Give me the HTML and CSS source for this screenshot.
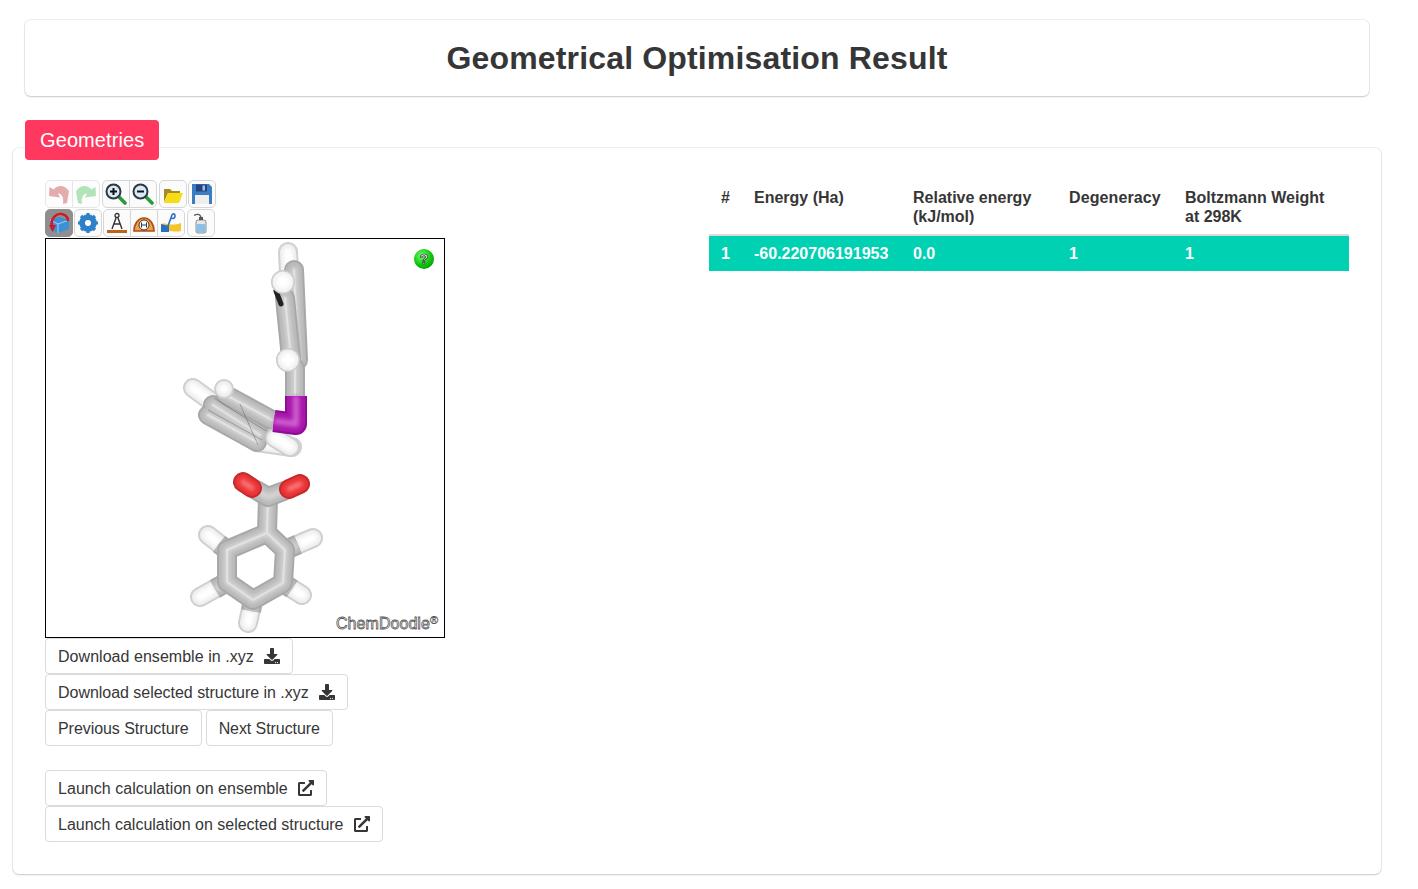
FILE: index.html
```html
<!DOCTYPE html>
<html lang="en">
<head>
<meta charset="utf-8">
<title>Geometrical Optimisation Result</title>
<link rel="stylesheet" href="styles.css">
</head>
<body>
<svg class="sprites" width="0" height="0" aria-hidden="true">
  <symbol id="i-download" viewBox="0 0 512 512"><path d="M216 0h80c13.3 0 24 10.7 24 24v168h87.7c17.8 0 26.7 21.5 14.1 34.1L269.7 378.3c-7.5 7.5-19.8 7.5-27.3 0L90.1 226.1c-12.6-12.6-3.7-34.1 14.1-34.1H192V24c0-13.3 10.7-24 24-24zm296 376v112c0 13.3-10.7 24-24 24H24c-13.3 0-24-10.7-24-24V376c0-13.3 10.7-24 24-24h146.7l49 49c20.1 20.1 52.5 20.1 72.6 0l49-49H488c13.3 0 24 10.7 24 24zm-124 88c0-11-9-20-20-20s-20 9-20 20 9 20 20 20 20-9 20-20zm64 0c0-11-9-20-20-20s-20 9-20 20 9 20 20 20 20-9 20-20z"/></symbol>
  <symbol id="i-external" viewBox="0 0 512 512"><path d="M432,320H400a16,16,0,0,0-16,16V448H64V128H208a16,16,0,0,0,16-16V80a16,16,0,0,0-16-16H48A48,48,0,0,0,0,112V464a48,48,0,0,0,48,48H400a48,48,0,0,0,48-48V336A16,16,0,0,0,432,320ZM488,0h-128c-21.37,0-32.05,25.91-17,41l35.73,35.73L135,320.37a24,24,0,0,0,0,34L157.67,377a24,24,0,0,0,34,0L435.28,133.32,471,169c15,15,41,4.5,41-17V24A24,24,0,0,0,488,0Z"/></symbol>
</svg>

<header class="title-box">
  <h1 class="title">Geometrical Optimisation Result</h1>
</header>

<main class="section">
  <div class="tag">Geometries</div>
  <div class="panel">
    <div class="col-left">
      <div class="toolbar">
        <div class="tool-row">
          <div class="tool-group">
            <span class="tool disabled"><svg viewBox="0 0 22 22"><path d="M1 13 L1.500 4 L5.500 6.500 C10 1 17 2 21 8 L19 20 L15 21 C16 15 14 10.500 10 10.500 L12 14.500 Z" fill="#e3adad"/></svg></span>
            <span class="tool disabled"><svg viewBox="0 0 22 22"><path d="M21 13 L20.500 4 L16.500 6.500 C12 1 5 2 1 8 L3 20 L7 21 C6 15 8 10.500 12 10.500 L10 14.500 Z" fill="#b2e4ba"/></svg></span>
          </div>
          <div class="tool-group">
            <span class="tool"><svg viewBox="0 0 22 22"><path d="M13 13 L20 20" stroke="#2a9a3a" stroke-width="3.600" stroke-linecap="round"/><circle cx="8.500" cy="8.500" r="7" fill="#d8eaf6" stroke="#2b3a44" stroke-width="2"/><path d="M5 8.500h7M8.500 5v7" stroke="#111" stroke-width="2"/></svg></span>
            <span class="tool"><svg viewBox="0 0 22 22"><path d="M13 13 L20 20" stroke="#2a9a3a" stroke-width="3.600" stroke-linecap="round"/><circle cx="8.500" cy="8.500" r="7" fill="#d8eaf6" stroke="#2b3a44" stroke-width="2"/><path d="M5 8.500h7" stroke="#111" stroke-width="2"/></svg></span>
          </div>
          <div class="tool-group">
            <span class="tool"><svg viewBox="0 0 22 22"><path d="M2 19 L2 6 L8 6 L10 8 L18 8 L18 10 L6 10 Z" fill="#a88a20"/><path d="M2 20 L6 10 L21 10 L17 20 Z" fill="#f6dc16"/></svg></span>
          </div>
          <div class="tool-group">
            <span class="tool"><svg viewBox="0 0 22 22"><path d="M1 1 H18 L21 4 V21 H1 Z" fill="#3c7cc4"/><rect x="5" y="1.500" width="11" height="7" fill="#24447a"/><rect x="11.500" y="2.500" width="2.500" height="5" fill="#9cc0e4"/><rect x="4" y="12" width="14" height="9" fill="#eeeeee"/></svg></span>
          </div>
        </div>
        <div class="tool-row">
          <div class="tool-group">
            <span class="tool active"><svg viewBox="0 0 22 22"><path d="M11 5 L21 8 L21 17 L10 21 L2 17 L2 8 Z" fill="#3d8fd6"/><path d="M2 8 L10 12 L21 8 M10 12 V21" stroke="#a8d2f2" fill="none"/><path d="M4 14 C2 6 9 1 14 2 C18 3 20 5 20 9" fill="none" stroke="#d8141c" stroke-width="2.400"/><path d="M1 13 L8 13 L4.500 20 Z" fill="#d8141c"/></svg></span>
          </div>
          <div class="tool-group">
            <span class="tool"><svg viewBox="0 0 22 22"><circle cx="11" cy="11" r="6.500" fill="none" stroke="#2f80c8" stroke-width="4.500"/><path d="M11 1v20M1 11h20M4 4l14 14M18 4L4 18" stroke="#2f80c8" stroke-width="3.200"/><circle cx="11" cy="11" r="3" fill="#fff"/></svg></span>
          </div>
          <div class="tool-group">
            <span class="tool"><svg viewBox="0 0 22 22"><circle cx="11" cy="3.500" r="2" fill="none" stroke="#333" stroke-width="1.300"/><path d="M10 6 L6 17 M12 6 L16 17 M8 12 H14" stroke="#333" stroke-width="1.400" fill="none"/><rect x="1" y="18" width="20" height="3" fill="#b8631e"/></svg></span>
            <span class="tool"><svg viewBox="0 0 22 22"><path d="M1 19 A10 13 0 0 1 21 19 Z" fill="#f2a24a" stroke="#a84f14" stroke-width="1.600"/><circle cx="11" cy="13" r="5" fill="#fff" stroke="#333" stroke-width="1"/><path d="M8 13h6M8.500 10.500v5M13.500 10.500v5" stroke="#333" stroke-width="1"/></svg></span>
            <span class="tool"><svg viewBox="0 0 22 22"><path d="M1 12 C7 10 10 15 21 11 L21 19 C13 21 8 17 1 20 Z" fill="#f6c52a"/><path d="M1 12 L9 14 L9 20 L1 20 Z" fill="#2a6fc0"/><path d="M8 14 L12 3 C13 1 15.500 2 15 4.500 C14.500 7 12 7 11 5.500" fill="none" stroke="#2a6fc0" stroke-width="1.600"/></svg></span>
          </div>
          <div class="tool-group">
            <span class="tool"><svg viewBox="0 0 22 22"><rect x="6" y="8" width="10" height="13" rx="2" fill="#e4e8ea" stroke="#777" stroke-width=".8"/><rect x="6.500" y="12" width="9" height="8.500" rx="1.500" fill="#8cc0e6"/><rect x="9" y="5" width="4" height="3" fill="#555"/><path d="M11 5 C10 2 7 1.500 4 3.500" stroke="#555" stroke-width="1.300" fill="none"/></svg></span>
          </div>
        </div>
      </div>

      <div class="canvas">
        <svg class="molecule" viewBox="46 239 398 398" role="img" aria-label="3D molecule view">
          <defs>
            <filter id="soft" filterUnits="userSpaceOnUse" x="46" y="239" width="398" height="398"><feGaussianBlur stdDeviation="2.200"/></filter>
            <filter id="softer" filterUnits="userSpaceOnUse" x="46" y="239" width="398" height="398"><feGaussianBlur stdDeviation=".7"/></filter>
            <radialGradient id="qball" cx=".4" cy=".35" r=".7"><stop offset="0" stop-color="#77ff77"/><stop offset=".6" stop-color="#10cc10"/><stop offset="1" stop-color="#0a9a0a"/></radialGradient>

            <path id="low-h" d="M227 550 L208 535 M285 550 L313 538 M227 582 L200 597 M283 583 L302 595 M253 600 L248 623"/>
            <path id="low-stub" d="M227 550 L219 544 M285 550 L298 544.500 M227 582 L215 589 M283 583 L292 589 M253 600 L251 611"/>
            <path id="low-ring" d="M268 497 L267 533 M267 533 L227 550 L227 582 L253 600 L283 583 L285 550 Z"/>
            <path id="low-o" d="M243 482 L252 488 M300 484 L289 489"/>
            <path id="low-c" d="M256 490 L268 497 L284 491"/>

            <path id="up-h-back" d="M288 252 L289 272 M193 388 L215 404 M257 442 L292 447"/>
            <path id="up-ring-back" d="M294 270 L298 360 M208 415 L257 442 M213 405 L260 435"/>
            <path id="up-ring-front" d="M285 298 L291 358 M295 368 L295 396 M226 395 L272 420"/>
            <path id="up-h-front" d="M283 282 h.01 M288 360 h.01"/>
            <path id="up-h-side" d="M224 389 h.01 M290 447 L275 438"/>
            <path id="up-i" d="M296 396 L296 424 L274 421"/>
          </defs>

          <g class="rod">
            <use href="#up-h-back" class="w1"/><use href="#up-h-back" class="w2"/><use href="#up-h-back" class="w3"/>
            <use href="#up-ring-back" class="g1"/><use href="#up-ring-back" class="g2"/><use href="#up-ring-back" class="g3"/><use href="#up-ring-back" class="g4"/>
            <use href="#up-ring-front" class="g1"/><use href="#up-ring-front" class="g2"/><use href="#up-ring-front" class="g3"/><use href="#up-ring-front" class="g4"/>
            <path class="edge-dark" d="M276 291 L281 304"/>
            <use href="#up-h-side" class="w1"/><use href="#up-h-side" class="w2"/><use href="#up-h-side" class="w3"/>
            <use href="#up-i" class="butt p1"/><use href="#up-i" class="butt p2"/><use href="#up-i" class="butt p3"/>
            <use href="#up-h-front" class="b1"/><use href="#up-h-front" class="b2"/><use href="#up-h-front" class="b3"/>
            <path class="edge" d="M214 398 L266 431 M208 410 L262 440 M240 404 L258 445"/>

            <use href="#low-h" class="w1"/><use href="#low-h" class="w2"/><use href="#low-h" class="w3"/>
            <use href="#low-stub" class="butt g1"/><use href="#low-stub" class="butt g2"/><use href="#low-stub" class="butt g3"/>
            <use href="#low-ring" class="g1"/><use href="#low-ring" class="g2"/><use href="#low-ring" class="g3"/><use href="#low-ring" class="g4"/>
            <use href="#low-c" class="g1"/><use href="#low-c" class="g2"/><use href="#low-c" class="g3"/>
            <use href="#low-o" class="r1"/><use href="#low-o" class="r2"/><use href="#low-o" class="r3"/>
          </g>

          <circle cx="424" cy="259" r="10" fill="url(#qball)"/>
          <text x="424" y="264" class="help">?</text>
          <text x="336" y="629" class="brand">ChemDoodle</text>
          <text x="430" y="624" class="brand-mark">®</text>
        </svg>
      </div>

      <div class="actions">
        <div class="btn-row"><a class="btn fit-a">Download ensemble in .xyz<svg class="btn-icon"><use href="#i-download"/></svg></a></div>
        <div class="btn-row"><a class="btn fit-b">Download selected structure in .xyz<svg class="btn-icon"><use href="#i-download"/></svg></a></div>
        <div class="btn-row"><a class="btn fit-c">Previous Structure</a><a class="btn fit-d">Next Structure</a></div>
      </div>
      <div class="actions launch">
        <div class="btn-row"><a class="btn fit-a">Launch calculation on ensemble<svg class="btn-icon"><use href="#i-external"/></svg></a></div>
        <div class="btn-row"><a class="btn">Launch calculation on selected structure<svg class="btn-icon"><use href="#i-external"/></svg></a></div>
      </div>
    </div>

    <div class="col-right">
      <table class="table">
        <thead>
          <tr>
            <th class="c-num">#</th>
            <th class="c-energy">Energy (Ha)</th>
            <th class="c-rel">Relative energy (kJ/mol)</th>
            <th class="c-deg">Degeneracy</th>
            <th>Boltzmann Weight at 298K</th>
          </tr>
        </thead>
        <tbody>
          <tr class="selected">
            <td>1</td>
            <td>-60.220706191953</td>
            <td>0.0</td>
            <td>1</td>
            <td>1</td>
          </tr>
        </tbody>
      </table>
    </div>
  </div>
</main>
</body>
</html>
```

FILE: styles.css
```css
* { box-sizing: border-box; }

html, body { margin: 0; padding: 0; background: #fff; }

body {
  font-family: "Liberation Sans", Arial, sans-serif;
  font-size: 16px;
  color: #363636;
  padding: 20px 37px 0 13px;
  min-height: 889px;
}

.sprites { display: block; width: 0; height: 0; }

.title-box {
  margin: 0 12px;
  padding: 20px;
  height: 76px;
  background: #fff;
  border-radius: 6px;
  box-shadow: 0 1px 2px rgba(10, 10, 10, .18), 0 0 0 1px rgba(10, 10, 10, .06);
}

.title {
  margin: 0;
  font-size: 32px;
  line-height: 36px;
  font-weight: 700;
  letter-spacing: .16px;
  text-align: center;
  color: #363636;
}

.section { margin-top: 24px; }

.tag {
  position: relative;
  z-index: 1;
  display: block;
  width: fit-content;
  margin: 0 0 -12px 12px;
  height: 40px;
  padding: 0 15px;
  font-size: 20px;
  line-height: 40px;
  letter-spacing: .1px;
  color: #fff;
  background: #ff3860;
  border-radius: 4px;
}

.panel {
  display: grid;
  grid-template-columns: 640px 640px;
  column-gap: 24px;
  padding: 32px;
  height: 726px;
  background: #fff;
  border-radius: 6px;
  box-shadow: 0 1px 2px rgba(10, 10, 10, .18), 0 0 0 1px rgba(10, 10, 10, .06);
}

/* Viewer toolbar */
.toolbar { display: flex; flex-direction: column; gap: 1px; height: 58px; }
.tool-row { display: flex; gap: 2px; height: 28px; }
.tool-row .tool-group:last-child { margin-left: -1px; }
.tool-row + .tool-row { gap: 1px; }
.tool-row + .tool-row .tool-group:last-child { margin-left: 1px; }
.tool-group { display: flex; }

.tool {
  display: flex;
  align-items: center;
  justify-content: center;
  width: 28px;
  height: 28px;
  background: #fbfbfb;
  border: 1px solid #d6d6d6;
  border-radius: 5px;
}
.tool-group .tool + .tool { margin-left: -1px; }
.tool-group .tool:not(:last-child) { border-top-right-radius: 0; border-bottom-right-radius: 0; }
.tool-group .tool:not(:first-child) { border-top-left-radius: 0; border-bottom-left-radius: 0; }
.tool svg { width: 22px; height: 22px; display: block; }
.tool.disabled { background: #fdfdfd; border-color: #e6e6e6; }
.tool.active { background: #8f8f8f; border-color: #8f8f8f; }

/* Molecule */
.canvas {
  width: 400px;
  height: 400px;
  border: 1px solid #000;
  background: #fff;
}
.molecule { display: block; width: 398px; height: 398px; }

.rod { fill: none; stroke-linecap: round; stroke-linejoin: round; }
.butt { stroke-linecap: butt; }
.g1, .g2, .g3, .g4, .w1, .w2, .w3, .p1, .p2, .p3, .r1, .r2, .r3, .b1, .b2, .b3 { fill: none; }

.g1 { stroke: #a8a8a8; stroke-width: 20px; filter: url(#softer); }
.g2 { stroke: #b8b8b8; stroke-width: 16px; filter: url(#softer); }
.g3 { stroke: #d4d4d4; stroke-width: 7px; filter: url(#soft); }
.g4 { stroke: #e2e2e2; stroke-width: 2px; filter: url(#softer); }

.w1 { stroke: #cecece; stroke-width: 20px; filter: url(#softer); }
.w2 { stroke: #ececec; stroke-width: 16px; filter: url(#softer); }
.w3 { stroke: #ffffff; stroke-width: 10px; filter: url(#soft); }

.b1 { stroke: #cacaca; stroke-width: 24px; filter: url(#softer); }
.b2 { stroke: #efefef; stroke-width: 21px; filter: url(#softer); }
.b3 { stroke: #ffffff; stroke-width: 15px; filter: url(#soft); }

.p1 { stroke: #8e0c92; stroke-width: 22px; filter: url(#softer); }
.p2 { stroke: #a812ac; stroke-width: 18px; filter: url(#softer); }
.p3 { stroke: #cf60cf; stroke-width: 6px; filter: url(#soft); }

.r1 { stroke: #c42a2a; stroke-width: 20px; filter: url(#softer); }
.r2 { stroke: #e83034; stroke-width: 16px; filter: url(#softer); }
.r3 { stroke: #ff8080; stroke-width: 5px; filter: url(#soft); }

.edge { fill: none; stroke: #4a4a4a; stroke-width: .7px; stroke-opacity: .55; stroke-linecap: butt; }
.edge-dark { fill: none; stroke: #222; stroke-width: 5px; stroke-linecap: round; stroke-linejoin: round; filter: url(#softer); }

.help {
  font-family: "Liberation Sans", Arial, sans-serif;
  font-size: 14px;
  font-weight: 700;
  text-anchor: middle;
  fill: #fff;
  stroke: #222;
  stroke-width: .7px;
}
.brand {
  font-family: "Liberation Sans", Arial, sans-serif;
  font-size: 16px;
  letter-spacing: .05px;
  fill: #fff;
  stroke: #5a5a5a;
  stroke-width: .8px;
}
.brand-mark {
  font-family: "Liberation Sans", Arial, sans-serif;
  font-size: 11px;
  fill: #ddd;
  stroke: #555;
  stroke-width: .4px;
}

/* Buttons */
.actions { display: flex; flex-direction: column; }
.launch { margin-top: 24px; }
.btn-row { display: flex; gap: 4px; height: 36px; }

.btn {
  display: inline-flex;
  align-items: center;
  height: 36px;
  padding: 2px 12px 0;
  line-height: 24px;
  background: #fff;
  border: 1px solid #dbdbdb;
  border-radius: 4px;
  font-size: 16px;
  color: #363636;
  white-space: nowrap;
}
.fit-a { letter-spacing: .04px; }
.fit-b { letter-spacing: -.028px; }
.fit-c { letter-spacing: -.055px; }
.fit-d { letter-spacing: -.07px; }

.btn-icon { width: 16px; height: 16px; margin: -2px 0 0 10px; fill: #363636; display: block; }

/* Table */
.table { width: 640px; border-collapse: collapse; table-layout: fixed; color: #363636; line-height: 19px; }
.table th, .table td { padding: 8px 12px; text-align: left; vertical-align: top; font-weight: 700; }
.table th { border-bottom: 2px solid #dbdbdb; }
.c-num { width: 33px; }
.c-energy { width: 159px; }
.c-rel { width: 156px; }
.c-deg { width: 116px; letter-spacing: .1px; }
.selected td { background: #00d1b2; color: #fff; }
```
